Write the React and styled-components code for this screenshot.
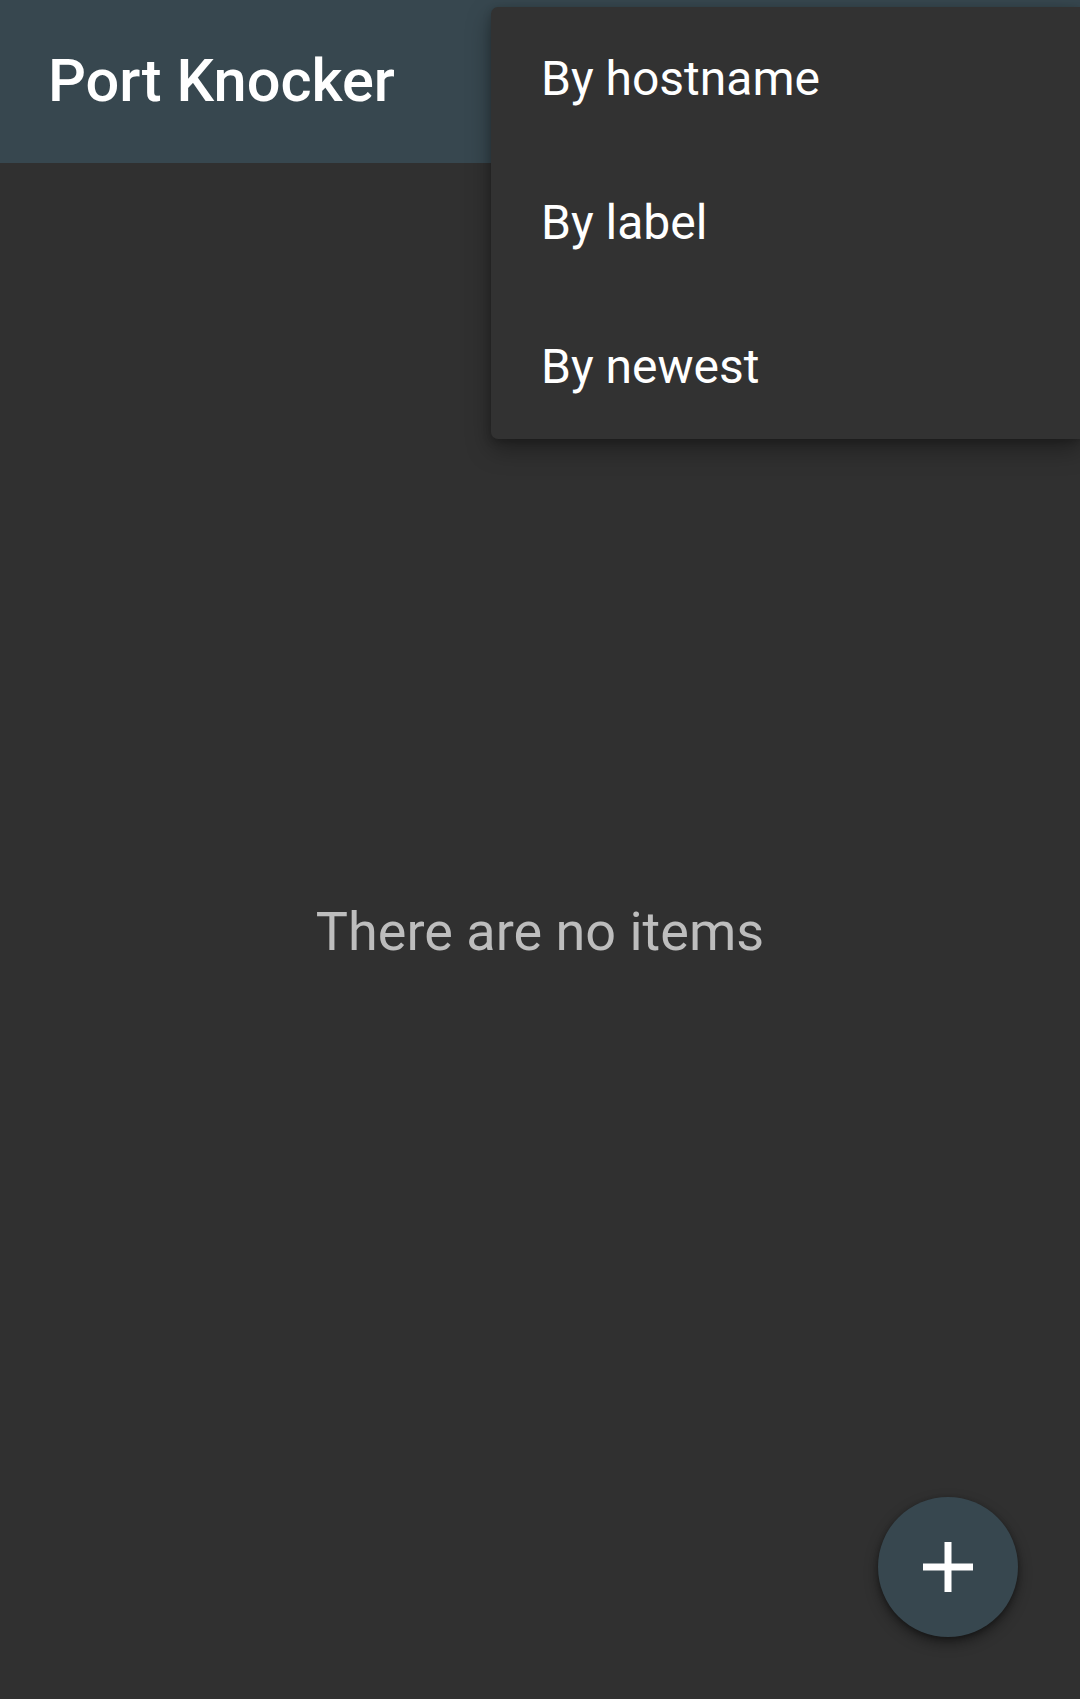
import React from 'react';
import styled, { createGlobalStyle } from 'styled-components';

const GlobalStyle = createGlobalStyle`
  html, body {
    margin: 0;
    padding: 0;
    background-color: #303030;
    font-family: Roboto, "Noto Sans", sans-serif;
  }
`;

const Screen = styled.div`
  position: relative;
  width: 1080px;
  height: 1699px;
  display: flex;
  flex-direction: column;
  background-color: #303030;
  overflow: hidden;
`;

const Toolbar = styled.header`
  height: 163px;
  flex-shrink: 0;
  display: flex;
  align-items: center;
  padding-left: 48px;
  background-color: #37474f;
`;

const Title = styled.h1`
  margin: 0 0 2px 0;
  color: #ffffff;
  font-size: 59.5px;
  font-weight: 500;
`;

const Body = styled.main`
  flex: 1;
  display: flex;
  align-items: center;
  justify-content: center;
`;

const EmptyText = styled.p`
  margin: 0;
  color: #bdbdbd;
  font-size: 54px;
  font-weight: 400;
`;

const Menu = styled.ul`
  position: absolute;
  top: 7px;
  left: 491px;
  right: 0;
  margin: 0;
  padding: 0;
  list-style: none;
  background-color: #323232;
  border-radius: 7px 0 0 7px;
  box-shadow: 0 10px 24px rgba(0, 0, 0, 0.35), 0 3px 8px rgba(0, 0, 0, 0.2);
`;

const MenuItem = styled.li`
  height: 144px;
  display: flex;
  align-items: center;
  padding: 0 0 2px 50px;
  box-sizing: border-box;
  color: #ffffff;
  font-size: 48px;
  font-weight: 400;
`;

const Fab = styled.button`
  position: absolute;
  right: 62px;
  bottom: 62px;
  width: 140px;
  height: 140px;
  border: none;
  border-radius: 50%;
  background-color: #37474f;
  display: flex;
  align-items: center;
  justify-content: center;
  box-shadow: 0 6px 14px rgba(0, 0, 0, 0.4), 0 2px 5px rgba(0, 0, 0, 0.3);
  padding: 0;
`;

const PlusIcon = () => (
  <svg width="50" height="50" viewBox="0 0 50 50">
    <rect x="0" y="21.5" width="50" height="7" fill="#ffffff" />
    <rect x="21.5" y="0" width="7" height="50" fill="#ffffff" />
  </svg>
);

const sortOptions = ['By hostname', 'By label', 'By newest'];

const App = () => {
  return (
    <>
      <GlobalStyle />
      <Screen>
        <Toolbar>
          <Title>Port Knocker</Title>
        </Toolbar>
        <Body>
          <EmptyText>There are no items</EmptyText>
        </Body>
        <Menu>
          {sortOptions.map((option) => (
            <MenuItem key={option}>{option}</MenuItem>
          ))}
        </Menu>
        <Fab aria-label="Add">
          <PlusIcon />
        </Fab>
      </Screen>
    </>
  );
};

export default App;
